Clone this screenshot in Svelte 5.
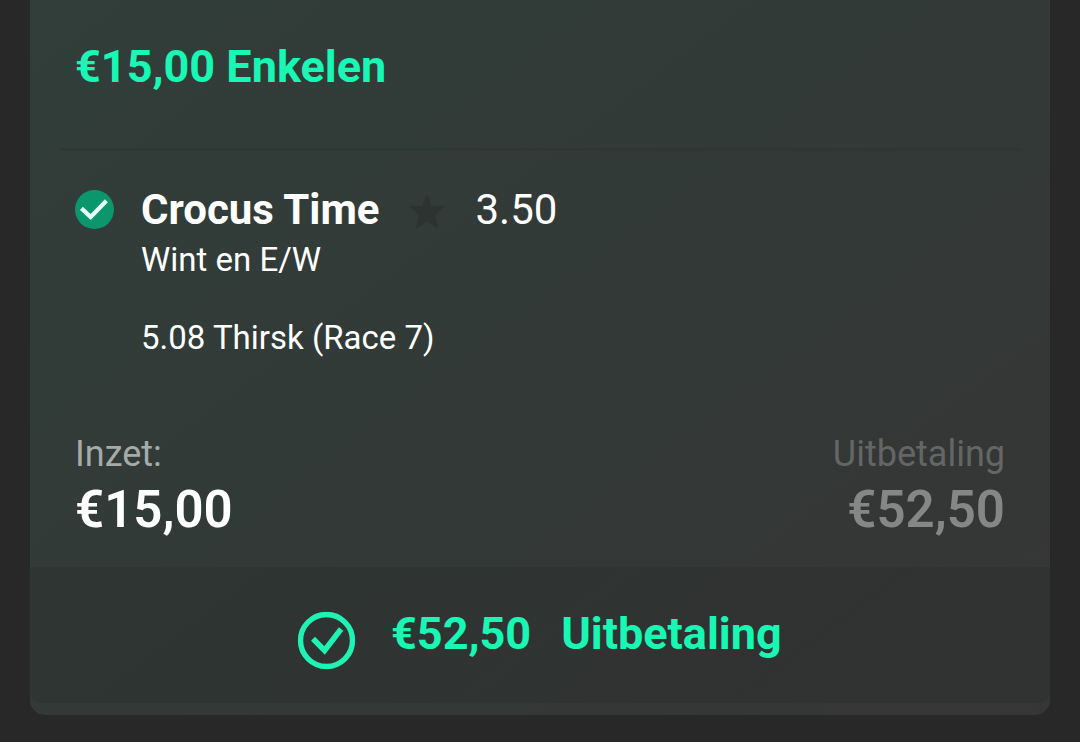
<script>
  const bet = {
    title: '€15,00 Enkelen',
    selection: 'Crocus Time',
    odds: '3.50',
    market: 'Wint en E/W',
    event: '5.08 Thirsk (Race 7)',
    stake: '€15,00',
    payout: '€52,50'
  };
</script>

<main>
  <article class="card">
    <header><h1>{bet.title}</h1></header>
    <section class="selection">
      <svg class="won" viewBox="0 0 40 40" aria-hidden="true">
        <circle cx="20.5" cy="19.6" r="19.5" fill="#0b966b" />
        <path d="M7.4 18.4 16.7 27 32.4 10.8" fill="none" stroke="#e6fff6" stroke-width="4.2" />
      </svg>
      <div class="details">
        <div class="line">
          <strong>{bet.selection}</strong>
          <svg class="star" viewBox="0 0 36 36" aria-hidden="true">
            <path d="M18 0 23 12H35.5L26 21.4 29.5 35 18 27.6 6.5 35 10 21.4 .5 12H13Z" fill="#2d3331" />
          </svg>
          <span class="odds">{bet.odds}</span>
        </div>
        <p>{bet.market}</p>
        <p class="event">{bet.event}</p>
      </div>
    </section>
    <section class="totals">
      <div class="stake">
        <span class="label">Inzet:</span>
        <span class="amount">{bet.stake}</span>
      </div>
      <div class="return">
        <span class="label">Uitbetaling</span>
        <span class="amount">{bet.payout}</span>
      </div>
    </section>
    <footer>
      <svg class="ring" viewBox="0 0 58 58" aria-hidden="true">
        <circle cx="29" cy="29" r="26" fill="none" stroke="#1ef3b3" stroke-width="5.4" />
        <path d="M15.5 27.3 27.1 38.9 43.6 17.5" fill="none" stroke="#1ef3b3" stroke-width="5.6" />
      </svg>
      <span class="paid">{bet.payout}</span>
      <span class="paid">Uitbetaling</span>
    </footer>
  </article>
</main>

<style>
  :global(body) {
    margin: 0;
    background: #282828;
  }
  main {
    box-sizing: border-box;
    height: 742px;
    padding: 0 30px 27px;
    overflow: hidden;
    background: #282828;
    font-family: Roboto, sans-serif;
    color: #fff;
  }
  .card {
    box-sizing: border-box;
    display: flex;
    flex-direction: column;
    height: 715px;
    padding-bottom: 12px;
    border-radius: 0 0 15px 15px;
    background: linear-gradient(143deg, #313e39 0%, #323a37 46%, #343735 75%, #363636 100%);
  }
  header {
    box-sizing: border-box;
    height: 151px;
    margin: 0 30px;
    padding: 41px 15px 0;
    border-bottom: 3px solid #2f3634;
  }
  h1 {
    margin: 0;
    font-size: 45px;
    line-height: 52px;
    font-weight: 700;
    color: #18f7b4;
  }
  .selection {
    display: flex;
    height: 281px;
    padding-left: 44px;
  }
  .won {
    width: 40px;
    height: 40px;
    margin: 39px 27px 0 0;
  }
  .details {
    padding-top: 34px;
  }
  .line {
    display: flex;
    align-items: center;
    height: 50px;
    font-size: 42px;
    line-height: 50px;
  }
  .star {
    width: 36px;
    height: 36px;
    margin: 3px 30px 0;
  }
  p {
    margin: 5px 0 0;
    font-size: 33px;
    line-height: 40px;
  }
  .event {
    margin-top: 38px;
  }
  .totals {
    display: flex;
    justify-content: space-between;
    height: 135px;
    padding: 0 45px;
  }
  .stake, .return {
    display: flex;
    flex-direction: column;
  }
  .return {
    align-items: flex-end;
  }
  .label {
    font-size: 36px;
    line-height: 44px;
    color: #a6aaa8;
  }
  .amount {
    font-size: 51px;
    line-height: 60px;
    margin-top: 4px;
    font-weight: 600;
  }
  .return .label {
    color: #646665;
  }
  .return .amount {
    color: #858786;
  }
  footer {
    display: flex;
    flex: 1;
    align-items: flex-start;
    padding: 0 0 0 267px;
    border-radius: 0 0 12px 12px;
    background: rgba(40, 44, 42, 0.32);
  }
  .ring {
    width: 58px;
    height: 58px;
    margin: 44px 36px 0 0;
    transform: translate(0.5px, 0.5px);
  }
  .paid {
    margin: 41px 30px 0 0;
    font-size: 45px;
    line-height: 52px;
    font-weight: 700;
    color: #18f7b4;
  }
</style>
